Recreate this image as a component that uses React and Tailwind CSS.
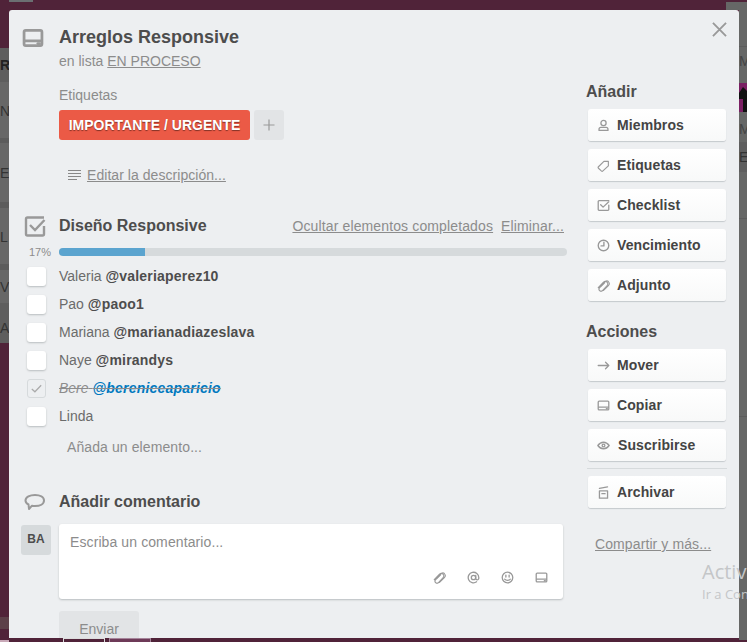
// App.jsx
import React from 'react';

const Icon = ({ children, className = 'w-[13px] h-[13px]', view = '0 0 16 16', sw = 1.6 }) => (
  <svg viewBox={view} className={className} fill="none" stroke="#999" strokeWidth={sw} strokeLinecap="round" strokeLinejoin="round">
    {children}
  </svg>
);

const CardIcon = ({ className, sw }) => (
  <Icon className={className} sw={sw}>
    <rect x="1.500" y="2.500" width="13" height="11" rx="1.200" />
    <path d="M2 10h12" />
    <path d="M11.500 12h1.200" />
  </Icon>
);

const PaperclipIcon = () => (
  <Icon sw={1.4}>
    <path d="M1.500 10.500 8 4a3 3 0 0 1 4.500 4.200L6.500 14.500a2.500 2.500 0 0 1-3.500-3.500L9 5" />
    <path d="M5 8.500 10.500 3a3 3 0 0 1 3.500 0" />
    <path d="M8 14 14 8a3 3 0 0 0 .5-4" />
  </Icon>
);

const addButtons = [
  {
    label: 'Miembros',
    icon: (
      <Icon>
        <circle cx="8" cy="5" r="3.200" />
        <path d="M2.500 14v-1.500c0-1.300 1-2.300 2.300-2.300h6.400c1.300 0 2.300 1 2.300 2.300V14z" />
      </Icon>
    ),
  },
  {
    label: 'Etiquetas',
    icon: (
      <Icon sw={1.400}>
        <path d="M1.800 9.500 8.500 3h5.500v5.500l-6.700 6.200a1.500 1.500 0 0 1-2 0l-3.500-3.300a1.400 1.400 0 0 1 0-1.900z" />
      </Icon>
    ),
  },
  {
    label: 'Checklist',
    icon: (
      <Icon>
        <path d="M14.500 7.500v5.500a1 1 0 0 1-1 1h-11a1 1 0 0 1-1-1V3a1 1 0 0 1 1-1h12" />
        <path d="m4.500 7 3 3L14.500 3.500" />
      </Icon>
    ),
  },
  {
    label: 'Vencimiento',
    icon: (
      <Icon sw={1.700}>
        <circle cx="8" cy="8" r="6.500" />
        <path d="M8.500 4V8.500H5" />
      </Icon>
    ),
  },
  { label: 'Adjunto', icon: <PaperclipIcon /> },
];

const actionButtons = [
  {
    label: 'Mover',
    icon: (
      <Icon>
        <path d="M1.500 8h13M10.500 4 14.500 8 10.500 12" />
      </Icon>
    ),
  },
  { label: 'Copiar', icon: <CardIcon /> },
  {
    label: 'Suscribirse',
    gap: 'ml-[1px]',
    icon: (
      <Icon>
        <path d="M1 8C3 5.200 5.300 4 8 4S13 5.200 15 8C13 10.800 10.700 12 8 12S3 10.800 1 8z" />
        <circle cx="8" cy="8" r="1.700" />
      </Icon>
    ),
  },
];

const checklist = [
  { name: 'Valeria', user: '@valeriaperez10' },
  { name: 'Pao', user: '@paoo1' },
  { name: 'Mariana', user: '@marianadiazeslava' },
  { name: 'Naye', user: '@mirandys' },
  { name: 'Bere', user: '@bereniceaparicio', done: true },
  { name: 'Linda' },
];

const SideButton = ({ item }) => (
  <div className="h-8 w-[138px] ml-[1px] flex items-center pl-[9px] rounded-[3px] bg-gradient-to-b from-white to-[#f8f9f9] shadow-[0_1px_1px_#c4c9cc] text-[14px] leading-none font-bold tracking-[0.1px] text-[#444]">
    <span className="w-[13px] h-[13px] mr-[7px] shrink-0 flex">{item.icon}</span>
    <span className={item.gap}>{item.label}</span>
  </div>
);

const CheckRow = ({ item }) => (
  <div className="h-7 flex items-center">
    <div className="w-[50px] pl-[18px] shrink-0">
      {item.done ? (
        <div className="w-[19px] h-[19px] rounded-[3px] border border-[#d6dadc] flex items-center justify-center">
          <svg viewBox="0 0 16 16" className="w-[15px] h-[15px]" fill="none" stroke="#aaa" strokeWidth="1.300">
            <path d="m3 8.500 3.300 3L13 4.500" />
          </svg>
        </div>
      ) : (
        <div className="w-[19px] h-[19px] rounded-[3px] bg-white shadow-[0_1px_2px_#b9bdbf]" />
      )}
    </div>
    {item.done ? (
      <span className="text-[14px] line-through text-[#8c8c8c] whitespace-nowrap">
        <em>{item.name}</em>{' '}
        <em className="font-bold text-[#0079bf] tracking-[0.2px]">{item.user}</em>
      </span>
    ) : (
      <span className="text-[14px] text-[#6b6b6b] whitespace-nowrap">
        {item.name}{' '}
        {item.user && <b className="text-[#4d4d4d] tracking-[0.2px]">{item.user}</b>}
      </span>
    )}
  </div>
);

const LeftStrip = () => (
  <div className="w-[9px] shrink-0 flex flex-col overflow-hidden text-[14px] leading-none text-[#333] bg-[#502339]">
    <div className="h-[48px] shrink-0" />
    <div className="h-[34px] shrink-0 bg-[#5e5e5e] flex items-center font-bold text-[#222]">R</div>
    <div className="h-[56px] shrink-0 bg-[#676767] flex items-center pt-[2px]">N</div>
    <div className="h-[5px] shrink-0 bg-[#5c5c5c]" />
    <div className="h-[59px] shrink-0 bg-[#676767] flex items-center">E</div>
    <div className="h-[6px] shrink-0 bg-[#5c5c5c]" />
    <div className="h-[56px] shrink-0 bg-[#676767] flex items-center pt-[2px]">L</div>
    <div className="h-[6px] shrink-0 bg-[#5c5c5c]" />
    <div className="h-[33px] shrink-0 bg-[#676767] flex items-center">V</div>
    <div className="h-[40px] shrink-0 bg-[#5e5e5e] flex items-center pt-[9px]">A</div>
    <div className="h-[274px] shrink-0" />
    <div className="h-[12px] shrink-0 bg-[#5c4049]" />
    <div className="h-[11px] shrink-0" />
    <div className="h-[2px] shrink-0 bg-[#c9a9b8]" />
  </div>
);

const RightStrip = () => (
  <div className="w-2 shrink-0 flex flex-col overflow-hidden text-[14px] leading-none text-[#444] bg-[#666766]">
    <div className="h-[2px] shrink-0 bg-[#502339]" />
    <div className="h-[45px] shrink-0 border-b border-[#5c5c5c]" />
    <div className="h-[36px] shrink-0 flex items-center pb-[8px]">M</div>
    <div className="h-[29px] shrink-0 bg-[#7a1f63]">
      <svg viewBox="0 0 8 29" className="w-2 h-[29px]" fill="#111">
        <path d="M0 10 4 4 8 8V29H4V16H0z" />
      </svg>
    </div>
    <div className="h-[30px] shrink-0 flex items-center pt-[4px]">M</div>
    <div className="h-[30px] shrink-0 bg-[#5e5e5e] flex items-center text-[#333]">E</div>
    <div className="h-[47px] shrink-0 border-b border-[#5c5c5c]" />
    <div className="h-[198px] shrink-0 border-b border-[#5c5c5c]" />
    <div className="flex-1" />
    <div className="h-[2px] shrink-0 bg-[#502339]" />
  </div>
);

export default function App() {
  return (
    <div className="relative w-[747px] h-[642px] overflow-hidden flex bg-[#502339] font-['Liberation_Sans',Arial,sans-serif] text-[#4d4d4d]">
      <LeftStrip />

      <div className="w-[730px] shrink-0 flex flex-col">
        <div className="h-[10px] shrink-0 flex justify-between">
          <div className="w-[24px] h-[2px] bg-[#6b6f72]" />
          <div className="w-[13px] mt-[2px] bg-[#666766]" />
        </div>
        <div className="h-[628px] shrink-0 rounded-t-[3px] overflow-hidden bg-[#edeff1] flex">
          {/* main column */}
          <div className="w-[578px] shrink-0 flex flex-col">
            <div className="flex mt-[16px]">
              <div className="w-[50px] pl-[13px] pt-[1px] shrink-0">
                <CardIcon className="w-[22px] h-[22px]" sw={2} />
              </div>
              <div>
                <div className="text-[18px] leading-[22px] font-bold">Arreglos Responsive</div>
                <div className="mt-[3px] text-[14px] leading-[20px] text-[#8c8c8c]">
                  en lista <span className="underline">EN PROCESO</span>
                </div>
              </div>
            </div>

            <div className="ml-[50px] mt-[14px] text-[14px] leading-[20px] text-[#8c8c8c]">Etiquetas</div>
            <div className="ml-[50px] mt-[5px] flex gap-1">
              <div className="h-[30px] w-[191px] rounded-[3px] bg-[#eb5a46] flex items-center justify-center text-[14px] font-bold text-white [text-shadow:0_1px_1px_rgba(0,0,0,0.45)]">
                IMPORTANTE / URGENTE
              </div>
              <div className="h-[30px] w-[30px] rounded-[3px] bg-[#e2e4e6] flex items-center justify-center">
                <svg viewBox="0 0 12 12" className="w-3 h-3" stroke="#999" strokeWidth="1.200">
                  <path d="M6 .5v11M.5 6h11" />
                </svg>
              </div>
            </div>

            <div className="ml-[59px] mt-[25px] flex items-center text-[14px] leading-[20px] text-[#8c8c8c] tracking-[0.05px]">
              <svg viewBox="0 0 13 12" className="w-[13px] h-[12px] mr-[6px]" stroke="#888" strokeWidth="1.200">
                <path d="M0 1.500h13M0 4.500h13M0 7.500h13M0 10.500h9" />
              </svg>
              <span className="underline">Editar la descripción...</span>
            </div>

            {/* checklist */}
            <div className="flex items-center h-[24px] mt-[29px]">
              <div className="w-[50px] pl-[15px] shrink-0">
                <svg viewBox="0 0 22 22" className="w-[22px] h-[22px]" fill="none" stroke="#999" strokeWidth="2.400">
                  <path d="M20 11v8a1.500 1.500 0 0 1-1.500 1.500h-15A1.500 1.500 0 0 1 2 19V4a1.500 1.500 0 0 1 1.500-1.500H20" />
                  <path d="m6 10 5 5 9.500-10" />
                </svg>
              </div>
              <div className="text-[16px] font-bold">Diseño Responsive</div>
              <div className="ml-auto mr-[23px] flex gap-2 text-[14px] text-[#8c8c8c] tracking-[0.13px]">
                <span className="underline">Ocultar elementos completados</span>
                <span className="underline">Eliminar...</span>
              </div>
            </div>

            <div className="flex items-center mt-[10px] h-[8px]">
              <div className="w-[50px] pl-[20px] shrink-0 text-[11px] leading-none text-[#8c8c8c]">17%</div>
              <div className="w-[508px] h-2 rounded-[4px] bg-[#d6dadc] overflow-hidden">
                <div className="h-2 w-[86px] bg-[#5ba4cf]" />
              </div>
            </div>

            <div className="mt-[6px]">
              {checklist.map((item) => (
                <CheckRow key={item.name} item={item} />
              ))}
            </div>

            <div className="ml-[58px] mt-[7px] text-[14px] leading-[20px] text-[#8c8c8c] tracking-[0.1px]">Añada un elemento...</div>

            {/* comment */}
            <div className="flex items-center h-[24px] mt-[33px]">
              <div className="w-[50px] pl-[15px] shrink-0">
                <svg viewBox="0 0 22 20" className="w-[22px] h-[20px]" fill="none" stroke="#999" strokeWidth="2" strokeLinejoin="round">
                  <path d="M11 3c5 0 9 2 9 5.500S16 14 11 14c-1 0-2 0-3-.3L5 17l-.5-4.500C2.500 11.500 1.500 10 1.500 8.500 1.500 5 6 3 11 3z" />
                </svg>
              </div>
              <div className="text-[16px] font-bold">Añadir comentario</div>
            </div>

            <div className="flex mt-[10px]">
              <div className="w-[50px] pl-3 shrink-0 pt-[1px]">
                <div className="w-[30px] h-[30px] rounded-[3px] bg-[#d6dadc] flex items-center justify-center text-[12px] font-bold leading-none pb-[2px]">BA</div>
              </div>
              <div className="w-[504px] h-[75px] rounded-[3px] bg-white shadow-[0_1px_2px_#b9bdbf] flex flex-col pl-[11px] pr-[15px]">
                <div className="mt-[8px] text-[14px] leading-[20px] text-[#8c8c8c] tracking-[0.1px]">Escriba un comentario...</div>
                <div className="mt-auto mb-[15px] flex justify-end gap-[21px]">
                  <PaperclipIcon />
                  <Icon>
                    <circle cx="8" cy="8" r="2.700" />
                    <path d="M10.700 5.300V9a1.800 1.800 0 0 0 3.800 0V8a6.500 6.500 0 1 0-2.700 5.300" />
                  </Icon>
                  <Icon>
                    <circle cx="8" cy="8" r="6.500" />
                    <path d="M6 5v2.500M10 5v2.500M4.500 10c1.700 2 5.300 2 7 0" />
                  </Icon>
                  <CardIcon />
                </div>
              </div>
            </div>

            <div className="ml-[50px] mt-[12px] w-[80px] h-[36px] shrink-0 rounded-[3px] bg-[#e2e4e6] flex items-center justify-center text-[14px] text-[#8c8c8c]">
              Enviar
            </div>
          </div>

          {/* sidebar */}
          <div className="flex-1 flex flex-col relative">
            <svg viewBox="0 0 16 16" className="absolute top-[12px] right-[12px] w-[15px] h-[15px]" stroke="#999" strokeWidth="2">
              <path d="M1 1l14 14M15 1 1 15" />
            </svg>
            <div className="mt-[72px] -ml-px text-[16px] leading-[20px] font-bold">Añadir</div>
            <div className="mt-[7px] flex flex-col gap-2">
              {addButtons.map((item) => (
                <SideButton key={item.label} item={item} />
              ))}
            </div>
            <div className="mt-[21px] -ml-px text-[16px] leading-[20px] font-bold">Acciones</div>
            <div className="mt-[7px] flex flex-col gap-2">
              {actionButtons.map((item) => (
                <SideButton key={item.label} item={item} />
              ))}
            </div>
            <div className="mt-[7px] mb-[7px] w-[140px] border-t border-[#d6dadc]" />
            <SideButton
              item={{
                label: 'Archivar',
                icon: (
                  <Icon>
                    <path d="M3 6h10v9H3zM3 3 13 1M6 9.500h4" />
                  </Icon>
                ),
              }}
            />
            <div className="ml-2 mt-[26px] text-[14px] leading-[20px] text-[#8c8c8c] underline tracking-[0.1px]">Compartir y más...</div>
          </div>
        </div>

        <div className="h-1 shrink-0 flex">
          <div className="ml-[54px] w-[42px] h-1 border-t border-x border-[#ddd]" />
          <div className="ml-[4px] w-[42px] h-1 border-t border-x border-[#a5849a] bg-[#6e3a58]" />
        </div>
      </div>

      <RightStrip />

      {/* windows activation watermark */}
      <div className="absolute left-[702px] top-[560px] font-['Open_Sans',sans-serif] whitespace-nowrap text-[#c4c6c8]">
        <div className="text-[20px] leading-[24px]">Activar</div>
        <div className="text-[13px] leading-[20px]">Ir a Config</div>
      </div>
    </div>
  );
}
